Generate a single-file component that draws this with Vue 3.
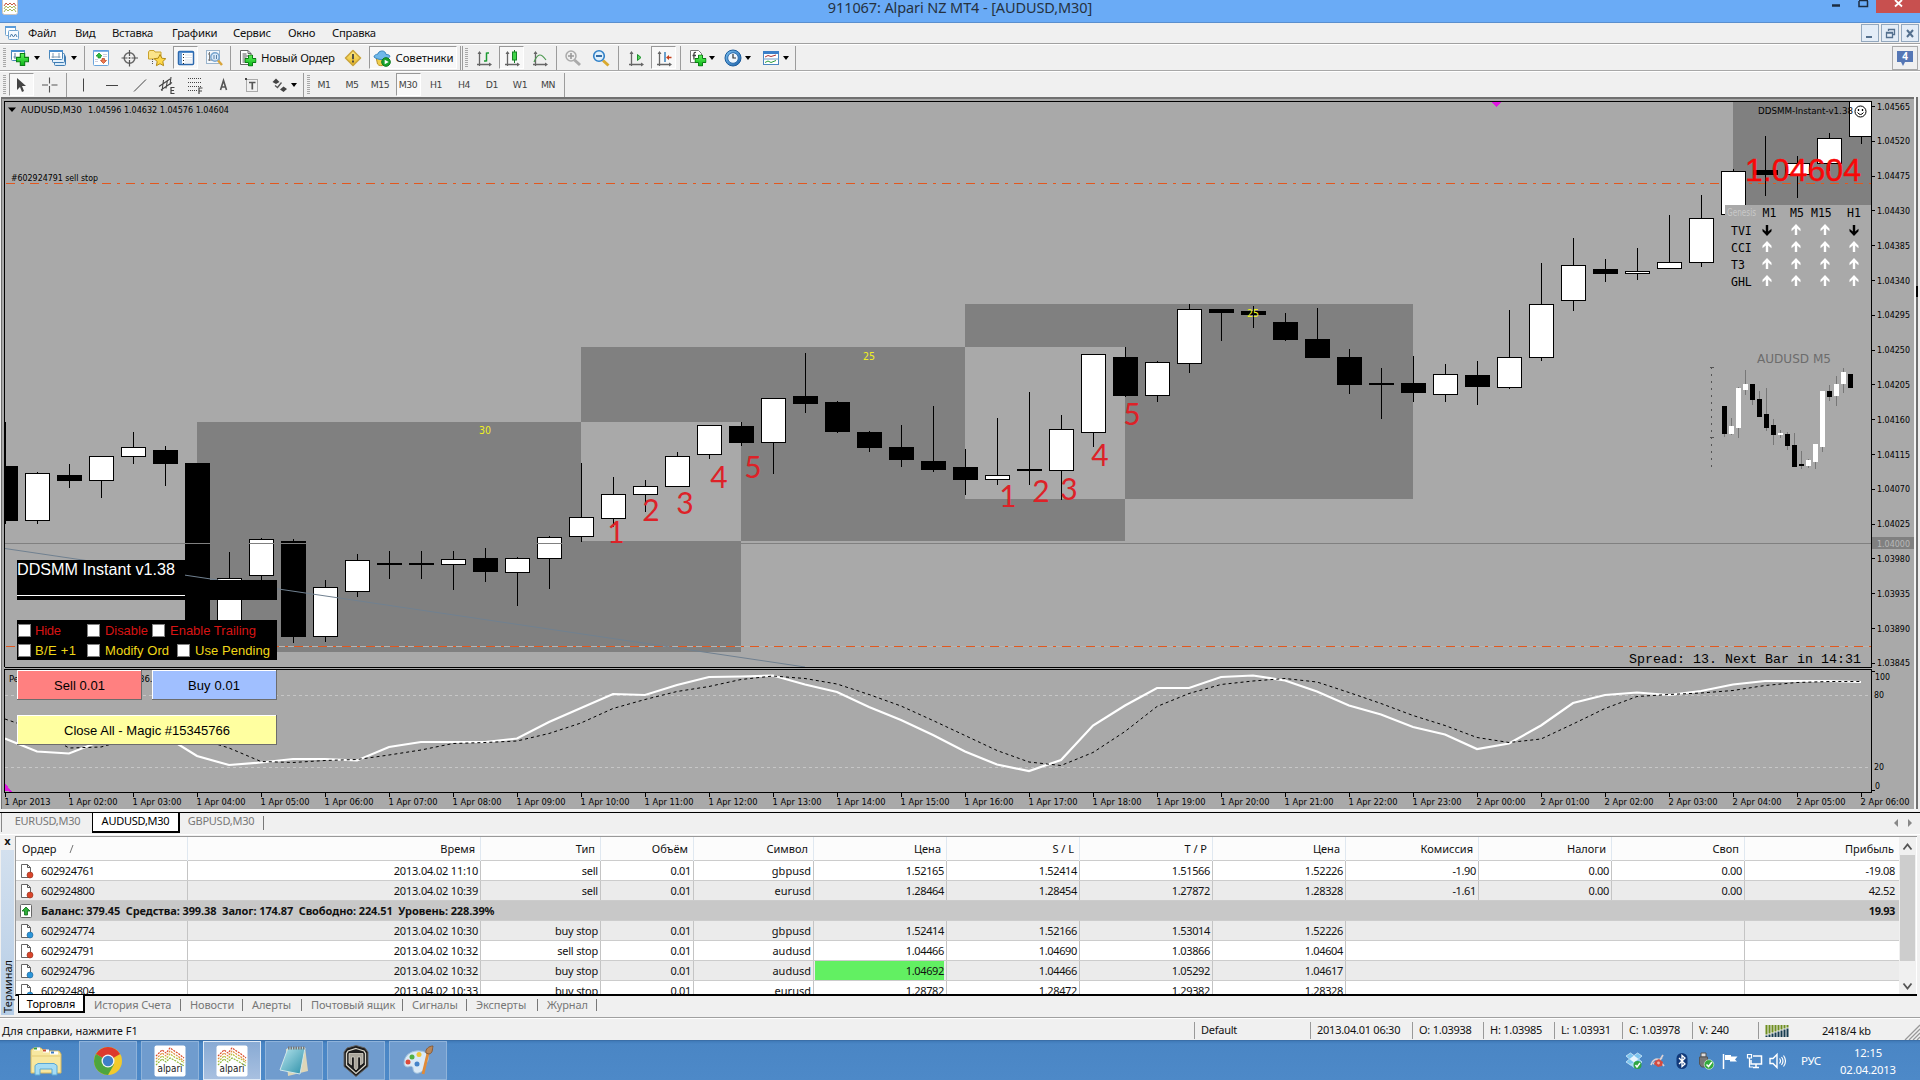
<script setup>
const menu = [
  ['Файл', 28, 29], ['Вид', 18, 20], ['Вставка', 17, 42], ['Графики', 18, 44],
  ['Сервис', 17, 37], ['Окно', 18, 27], ['Справка', 17, 43],
]

// kind, gap before, width, payload
const tools = [
  ['grip', 3, 3], ['icon', 5, 18, 'newchart'], ['arr', 5, 6], ['icon', 9, 18, 'profiles'], ['arr', 4, 6],
  ['sep', 7, 1], ['icon', 7, 18, 'market'], ['icon', 11, 18, 'target'], ['icon', 9, 18, 'star'],
  ['press', 7, 25, 'navigator'], ['icon', 7, 18, 'tester'], ['sep', 7, 1], ['icon', 8, 18, 'order'],
  ['text', 4, 76, 'Новый Ордер'], ['icon', 7, 18, 'warn'], ['press', 7, 88, 'experts', 'Советники'],
  ['sep', 3, 1], ['sep', 1, 1], ['grip', 2, 3], ['icon', 7, 18, 'bars'], ['press', 6, 25, 'candle'],
  ['icon', 7, 18, 'line'], ['sep', 7, 1], ['icon', 7, 18, 'zoomin'], ['icon', 10, 18, 'zoomout'],
  ['sep', 8, 1], ['icon', 8, 18, 'scroll'], ['press', 6, 25, 'shift'], ['sep', 4, 1],
  ['icon', 8, 18, 'indic'], ['arr', 2, 6], ['icon', 9, 18, 'clock'], ['arr', 3, 6],
  ['icon', 11, 18, 'template'], ['arr', 3, 6], ['sep', 6, 1],
]
const drawTools = [
  ['grip', 3, 3], ['press', 3, 25, 'cursor'], ['icon', 7, 18, 'cross'], ['sep', 7, 1], ['icon', 7, 18, 'vline'],
  ['icon', 11, 18, 'hline'], ['icon', 10, 18, 'trend'], ['icon', 9, 18, 'channel'], ['icon', 10, 18, 'fibo'],
  ['icon', 10, 18, 'lettera'], ['icon', 11, 18, 'lettert'], ['icon', 10, 18, 'shapes'], ['arr', 2, 6],
  ['sep', 6, 1], ['grip', 3, 3],
]
const frames = ['M1', 'M5', 'M15', 'M30', 'H1', 'H4', 'D1', 'W1', 'MN']

// colour, high, body top, body bottom, low
const bars = [
  ['b', 422, 466, 521, 524], ['w', 472, 473, 521, 524], ['b', 464, 475, 481, 488], ['w', 456, 456, 481, 498],
  ['w', 432, 447, 457, 464], ['b', 446, 450, 464, 486], ['b', 463, 463, 640, 642], ['w', 552, 578, 632, 636],
  ['w', 538, 539, 576, 582], ['b', 539, 541, 637, 643], ['w', 580, 587, 637, 642], ['w', 554, 560, 592, 597],
  ['b', 551, 563, 565, 579], ['b', 551, 563, 565, 579], ['w', 551, 559, 565, 590], ['b', 548, 558, 572, 582],
  ['w', 557, 558, 573, 606], ['w', 536, 537, 559, 589], ['w', 463, 517, 537, 542], ['w', 477, 494, 519, 527],
  ['w', 480, 486, 495, 512], ['w', 452, 456, 487, 487], ['w', 425, 425, 455, 459], ['b', 422, 426, 443, 446],
  ['w', 398, 398, 443, 474], ['b', 353, 396, 404, 413], ['b', 401, 402, 432, 433], ['b', 431, 432, 448, 452],
  ['b', 425, 447, 460, 467], ['b', 406, 461, 470, 472], ['b', 449, 467, 480, 495], ['w', 418, 475, 480, 485],
  ['b', 392, 469, 471, 485], ['w', 415, 429, 471, 500], ['w', 354, 354, 433, 447], ['b', 347, 357, 396, 397],
  ['w', 361, 362, 396, 402], ['w', 304, 309, 364, 373], ['b', 309, 309, 313, 341], ['b', 306, 311, 315, 328],
  ['b', 313, 322, 340, 341], ['b', 308, 339, 358, 358], ['b', 349, 357, 385, 394], ['b', 368, 383, 385, 419],
  ['b', 356, 383, 393, 402], ['w', 364, 374, 395, 402], ['b', 361, 375, 387, 405], ['w', 310, 357, 388, 389],
  ['w', 263, 304, 358, 361], ['w', 238, 265, 301, 311], ['b', 259, 269, 274, 282], ['w', 248, 271, 274, 280],
  ['w', 215, 262, 269, 269], ['w', 195, 218, 263, 267], ['w', 169, 171, 215, 215], ['b', 136, 170, 175, 196],
  ['w', 156, 163, 175, 198], ['w', 133, 138, 164, 171], ['w', 98, 98, 137, 144],
]
const mini = [
  ['b', 406, 434, 406, 437], ['w', 426, 434, 418, 435], ['w', 388, 428, 387, 438], ['w', 384, 390, 370, 395],
  ['b', 384, 400, 384, 405], ['b', 399, 417, 391, 417], ['b', 414, 428, 388, 431], ['b', 425, 435, 419, 445],
  ['w', 433, 435, 430, 438], ['b', 434, 446, 432, 450], ['b', 445, 467, 433, 467], ['b', 464, 466, 451, 469],
  ['w', 460, 466, 459, 468], ['w', 444, 462, 444, 469], ['w', 391, 447, 391, 452], ['b', 391, 397, 385, 401],
  ['w', 384, 396, 376, 406], ['w', 372, 384, 368, 393], ['b', 374, 388, 374, 388],
]
const main = [738.5, 751.5, 753.5, 741, 736, 736, 756, 765, 762.5, 759, 759, 760.5, 747, 742, 742, 742, 738.5, 722, 708, 694, 695,
  685, 677, 676.5, 675.5, 684.5, 692, 707, 720, 735, 751.5, 764.5, 771, 760, 725.5, 705.5, 688, 688, 677, 675.5, 680.5,
  691.5, 705.5, 714.5, 727, 734.5, 749, 743.5, 725.5, 703, 695, 692.5, 695, 691, 684.5, 681, 681, 681, 682]
const signal = [719, 730, 748, 747, 738, 736, 738, 748, 761.5, 762.5, 760.5, 759.5, 755, 750, 743.5, 742.5, 741, 733.5, 723, 708.5,
  699.5, 691.5, 686.5, 679.5, 676, 678.5, 684, 694.5, 706, 720.5, 735.5, 750.5, 762, 765.5, 752.5, 731.5, 706.5, 693.5,
  684.5, 681, 678.5, 682, 692.5, 703.5, 715.5, 725.5, 737.5, 742.5, 739, 724, 708.5, 696.5, 694.5, 693, 690.5, 685.5,
  682.5, 681.5, 681.5]
const pts = (a) => a.map((y, i) => `${5 + i * 32},${y}`).join(' ')

const prices = ['1.04565', '1.04520', '1.04475', '1.04430', '1.04385', '1.04340', '1.04295', '1.04250', '1.04205',
  '1.04160', '1.04115', '1.04070', '1.04025', '1.03980', '1.03935', '1.03890', '1.03845']
const times = Array.from({ length: 30 }, (_, k) => {
  if (k === 0) return '1 Apr 2013'
  const h = k + 1
  return h < 24 ? `1 Apr ${String(h).padStart(2, '0')}:00` : `2 Apr ${String(h - 24).padStart(2, '0')}:00`
})
const waves = [['1', 616, 543], ['2', 651, 521], ['3', 685, 514], ['4', 719, 488], ['5', 753, 478],
  ['1', 1008, 507], ['2', 1041, 502], ['3', 1069, 500], ['4', 1100, 466], ['5', 1132, 425]]
const signs = [['TVI', 235, 'duud'], ['CCI', 252, 'uuuu'], ['T3', 269, 'uuuu'], ['GHL', 286, 'uuuu']]
const signX = [1767, 1796, 1825, 1854]

const heads = ['Ордер', 'Время', 'Тип', 'Объём', 'Символ', 'Цена', 'S / L', 'T / P', 'Цена', 'Комиссия', 'Налоги', 'Своп', 'Прибыль']
const rows = [
  ['r', '602924761', '2013.04.02 11:10', 'sell', '0.01', 'gbpusd', '1.52165', '1.52414', '1.51566', '1.52226', '-1.90', '0.00', '0.00', '-19.08'],
  ['r', '602924800', '2013.04.02 10:39', 'sell', '0.01', 'eurusd', '1.28464', '1.28454', '1.27872', '1.28328', '-1.61', '0.00', '0.00', '42.52'],
  null,
  ['b', '602924774', '2013.04.02 10:30', 'buy stop', '0.01', 'gbpusd', '1.52414', '1.52166', '1.53014', '1.52226', '', '', '', ''],
  ['r', '602924791', '2013.04.02 10:32', 'sell stop', '0.01', 'audusd', '1.04466', '1.04690', '1.03866', '1.04604', '', '', '', ''],
  ['b', '602924796', '2013.04.02 10:32', 'buy stop', '0.01', 'audusd', '1.04692', '1.04466', '1.05292', '1.04617', '', '', '', ''],
  ['b', '602924804', '2013.04.02 10:33', 'buy stop', '0.01', 'eurusd', '1.28782', '1.28472', '1.29382', '1.28328', '', '', '', ''],
]
const termTabs = [['История Счета', 96], ['Новости', 62], ['Алерты', 59], ['Почтовый ящик', 101], ['Сигналы', 64], ['Эксперты', 71], ['Журнал', 59]]
const status = [['Default', 116], ['2013.04.01 06:30', 102], ['O: 1.03938', 71], ['H: 1.03985', 71], ['L: 1.03931', 68], ['C: 1.03978', 70], ['V: 240', 66]]
const apps = ['chrome', 'alpari', 'alpari', 'notepad', 'tanks', 'paint']
const tray = ['dropbox', 'gear', 'bt', 'usb', 'flag', 'net', 'sound']
</script>

<template>
  <div class="screen">
    <svg class="defs" width="0" height="0">
      <defs>
        <linearGradient id="gPlus" x1="0" y1="0" x2="0" y2="1"><stop offset="0" stop-color="#5ff45a" /><stop offset="1" stop-color="#0eb41a" /></linearGradient>
        <linearGradient id="gBlue" x1="0" y1="0" x2="1" y2="1"><stop offset="0" stop-color="#7fc4f2" /><stop offset="1" stop-color="#1a5fa8" /></linearGradient>
        <linearGradient id="gGold" x1="0" y1="0" x2="0" y2="1"><stop offset="0" stop-color="#ffef8a" /><stop offset="1" stop-color="#e5b21c" /></linearGradient>
        <linearGradient id="gNote" x1="0" y1="0" x2="1" y2="1"><stop offset="0" stop-color="#b9e6ee" /><stop offset="1" stop-color="#2b8fa8" /></linearGradient>
        <symbol id="plus" viewBox="0 0 12 12"><path d="M4 .5h4V4h3.500v4H8v3.500H4V8H.5V4H4z" fill="url(#gPlus)" stroke="#0a7d14" /></symbol>
        <symbol id="newchart" viewBox="0 0 18 18"><rect x=".5" y="1.500" width="13" height="10" rx="1" fill="#fff" stroke="#4a86b8" /><path d="M0 2h14" stroke="#4a8fcf" stroke-width="2" /><path d="M4 4v6M2.500 8h2M9 8h3" stroke="#54789a" fill="none" /><use href="#plus" x="5" y="4" width="13" height="13" /></symbol>
        <symbol id="profiles" viewBox="0 0 18 18"><rect x="5.500" y="6.500" width="11" height="10" rx="1" fill="#d8ebfa" stroke="#3f7cb3" /><rect x="3.500" y="4.500" width="12" height="9" rx="1" fill="#e4f1fc" stroke="#3f7cb3" /><rect x=".5" y="1.500" width="13" height="9" rx="1" fill="#fff" stroke="#4a86b8" /><path d="M0 2h14" stroke="#4a8fcf" stroke-width="2" /><path d="M4 4v5M2.500 8h9M10 4v5" stroke="#7d98b0" fill="none" /></symbol>
        <symbol id="market" viewBox="0 0 18 18"><rect x="1.500" y="1.500" width="15" height="15" rx="1" fill="#fff" stroke="#6aa5dc" /><path d="M1 2h16" stroke="#5a9be0" stroke-width="1.500" /><path d="M11 5.500h4M11 7.500h4M3 10.500h3M3 12.500h3" stroke="#ccd" /><path d="M7 4l3 3-1.500.2v1.800L6 9V7.200L4 7z" fill="#2fbe3c" stroke="#128a20" stroke-width=".7" /><path d="M11.500 14.500l-3-3 1.500-.2V9.500h2.500v1.800l2 .2z" fill="#ee7a50" stroke="#b8401c" stroke-width=".7" /></symbol>
        <symbol id="target" viewBox="0 0 18 18"><circle cx="8.500" cy="9" r="5.300" fill="none" stroke="#666" stroke-width="1.500" /><path d="M8.500 1v6M8.500 11v6.500M.5 9h6M10.500 9h6.500" stroke="#555" stroke-width="1.200" /><circle cx="8.500" cy="9" r="1" fill="#555" /></symbol>
        <symbol id="star" viewBox="0 0 18 18"><path d="M.5 10V3l1-1.500H6L7 3h6v7z" fill="#fbe48a" stroke="#c9a22d" /><path d="M4.500 10v5" stroke="#555" stroke-dasharray="1 1" /><path d="M12 5.500l1.800 3.700 4 .5-3 2.800.8 4.200-3.600-2-3.600 2 .8-4.200-3-2.800 4-.5z" fill="#ffd94a" stroke="#b38a14" /></symbol>
        <symbol id="navigator" viewBox="0 0 18 18"><rect x="1.500" y="2.500" width="15" height="13" rx="1" fill="#fff" stroke="#2c68ad" stroke-width="1.500" /><path d="M2 3h14" stroke="#2f74c0" stroke-width="1.500" /><rect x="2" y="4" width="3" height="11" fill="#6fa3dc" /><path d="M8 6h7M8 8.500h7M8 11h7M8 13h7" stroke="#d4dae4" stroke-width=".8" /><path d="M6.500 5v10" stroke="#222" stroke-dasharray="1 2" /></symbol>
        <symbol id="tester" viewBox="0 0 18 18"><rect x="1.500" y="1.500" width="13" height="13" fill="#f4f8fc" stroke="#9ab4cc" /><path d="M4.500 3v9M3 5h2M3 11h8" stroke="#777" /><circle cx="10" cy="8" r="4.200" fill="#d5e8f8" fill-opacity=".85" stroke="#79a5ce" stroke-width="1.500" /><path d="M9 6v4M11.500 6v4" stroke="#5a82a8" /><path d="M13 11.500l4 4.500" stroke="#d8a43a" stroke-width="2.500" /></symbol>
        <symbol id="order" viewBox="0 0 18 18"><path d="M1.500 1.500h7.500l3 3v11H1.500z" fill="#fff" stroke="#666" /><path d="M9 1.500v3h3" fill="none" stroke="#666" /><path d="M3.500 5h4M3.500 7h6M3.500 9h4M3.500 11h3M3.500 13h3" stroke="#555" /><use href="#plus" x="5.500" y="5.500" width="12" height="12" /></symbol>
        <symbol id="warn" viewBox="0 0 18 18"><path d="M9 1.500L16.500 9 9 16.500 1.500 9z" fill="url(#gGold)" stroke="#cba53c" stroke-linejoin="round" stroke-width="1.600" /><path d="M9 5v5.200M9 11.500v2" stroke="#444" stroke-width="1.800" /></symbol>
        <symbol id="experts" viewBox="0 0 18 18"><path d="M3 8l1.500 7c1 2 5 2 7 1l3-6z" fill="#f0cf4c" stroke="#b8922a" /><path d="M1 8c0-2 2-2.500 4-3 0-3 6-4.500 7.500-1 .5 1 .5 1.500.5 1.500 3 0 4 1 4 2-3 4-12 4-16 .5z" fill="#6fb8ea" stroke="#3b86bd" /><circle cx="13" cy="13" r="4.300" fill="#19a32c" stroke="#0c7a1b" /><path d="M11.700 10.700l4 2.300-4 2.300z" fill="#fff" /></symbol>
        <symbol id="axes" viewBox="0 0 18 18"><path d="M4.500 3v14M2 15.500h13.500" stroke="#666" stroke-width="1.300" fill="none" /><path d="M4.500 2l2 3h-4zM17 15.500l-3-2v4z" fill="#666" /></symbol>
        <symbol id="bars" viewBox="0 0 18 18"><use href="#axes" width="18" height="18" /><path d="M11.500 3.500v9M9 12h2.500M11.500 4H14" stroke="#1d9a33" stroke-width="1.500" /></symbol>
        <symbol id="candle" viewBox="0 0 18 18"><use href="#axes" width="18" height="18" /><path d="M11.500 1v13" stroke="#148023" /><rect x="9.500" y="3" width="4" height="8" fill="#3fd447" stroke="#148023" /></symbol>
        <symbol id="line" viewBox="0 0 18 18"><use href="#axes" width="18" height="18" /><path d="M3 13c4-9 7-9 12-2" stroke="#4d9a50" stroke-width="1.200" fill="none" /></symbol>
        <symbol id="zoomin" viewBox="0 0 18 18"><path d="M10.500 11l5.500 5" stroke="#aaa" stroke-width="3" /><circle cx="7" cy="7" r="5" fill="#eee" stroke="#aaa" stroke-width="1.500" /><path d="M4 7h6M7 4v6" stroke="#999" stroke-width="1.600" /></symbol>
        <symbol id="zoomout" viewBox="0 0 18 18"><path d="M11 11.500l5.500 5" stroke="#d9a92e" stroke-width="3" /><circle cx="7" cy="7" r="5.300" fill="#dff0fc" stroke="#2f80c8" stroke-width="1.600" /><path d="M4 7h6" stroke="#235f9e" stroke-width="1.800" /></symbol>
        <symbol id="scroll" viewBox="0 0 18 18"><use href="#axes" width="18" height="18" /><path d="M10.500 5.500l3.500 3-3.500 3z" fill="#57d65f" stroke="#1b8f2b" /></symbol>
        <symbol id="shift" viewBox="0 0 18 18"><use href="#axes" width="18" height="18" /><path d="M10 3v10" stroke="#2b7ab8" stroke-width="1.400" /><path d="M11 8.500l3-2.500v1.800h2.500v1.400H14V11z" fill="#c3401c" /></symbol>
        <symbol id="indic" viewBox="0 0 18 18"><path d="M1.500 1.500h8l3 3v9h-11z" fill="#fff" stroke="#777" /><path d="M7 3.500c-3-1-2 4-2 7M3.500 6.500H7" stroke="#444" fill="none" stroke-width="1.300" /><use href="#plus" x="5.500" y="5.500" width="12" height="12" /></symbol>
        <symbol id="clock" viewBox="0 0 18 18"><circle cx="9" cy="9" r="8" fill="url(#gBlue)" stroke="#1b5b9c" /><circle cx="9" cy="9" r="5.300" fill="#eef6fd" stroke="#2a6bad" /><path d="M9 5v4h3" stroke="#333" fill="none" stroke-width="1.200" /></symbol>
        <symbol id="template" viewBox="0 0 18 18"><rect x="1.500" y="2.500" width="15" height="13" fill="#fff" stroke="#4a86c0" /><path d="M1 3.500h16" stroke="#3b7fc8" stroke-width="3" /><path d="M1 10h16" stroke="#6a9bc8" /><path d="M3 8l3-1.500 3 1 5-1.500" stroke="#a33" fill="none" /><path d="M3 13.500l3-1.500 3 1.500 5-2" stroke="#2b9a3b" fill="none" /></symbol>
        <symbol id="cursor" viewBox="0 0 18 18"><path d="M4 2v12l3-3 2 5 2-1-2-5h4z" fill="#444" /></symbol>
        <symbol id="cross" viewBox="0 0 18 18"><path d="M8.500 1.500v6M8.500 10v6.500M1 9h6M10.500 9h6" stroke="#555" stroke-width="1.100" /></symbol>
        <symbol id="vline" viewBox="0 0 18 18"><path d="M9.500 2.500v13" stroke="#444" /></symbol>
        <symbol id="hline" viewBox="0 0 18 18"><path d="M3 9.500h12" stroke="#444" /></symbol>
        <symbol id="trend" viewBox="0 0 18 18"><path d="M3 15.500L15 3.500" stroke="#444" /></symbol>
        <symbol id="channel" viewBox="0 0 18 18"><path d="M1 10.500L12 3M3 14L14 6.500M4 15l1.500-11M8 12.500L9.500 4M12 9l1-8" stroke="#444" stroke-width="1.100" /><path d="M16.500 11.500H13v6h3.500M13 14.500h3" stroke="#444" fill="none" stroke-width="1.200" /></symbol>
        <symbol id="fibo" viewBox="0 0 18 18"><path d="M2 2.500h14M2 6.500h14M2 10.500h14M2 14.500h9" stroke="#444" stroke-dasharray="1 1" /><path d="M16.500 12H13v6M13 15h3" stroke="#444" fill="none" stroke-width="1.200" /></symbol>
        <symbol id="lettera" viewBox="0 0 18 18"><path d="M6.500 14L9.500 4.500 12.500 14M7.500 11h4" stroke="#555" fill="none" stroke-width="1.600" /></symbol>
        <symbol id="lettert" viewBox="0 0 18 18"><rect x="3.500" y="3.500" width="11" height="12" fill="none" stroke="#666" stroke-dasharray="1 1" /><path d="M6 6.500h6.500M9.300 6.500v7" stroke="#555" stroke-width="1.700" /><path d="M2 2h2v2H2z" fill="#444" /></symbol>
        <symbol id="shapes" viewBox="0 0 18 18"><path d="M1.500 6l3.500-3.500L8.500 6 5 8z" fill="#444" /><path d="M9 13.500l3.500-3 3.500 2.500-3.500 3z" fill="#444" /><path d="M4 9.500l2.500 2 4-5" stroke="#555" stroke-width="1.300" fill="none" /></symbol>
        <symbol id="up" viewBox="0 0 10 12"><path d="M5 0L.5 4.800v2.400l3.300-2.700V11h2.400V4.500l3.300 2.700V4.800z" fill="#fff" /></symbol>
        <symbol id="down" viewBox="0 0 10 12"><path d="M5 12L.5 7.200V4.800l3.300 2.700V1h2.400v6.500l3.300-2.700v2.400z" fill="#000" /></symbol>
        <symbol id="alpari" viewBox="0 0 32 32">
          <rect x=".5" y=".5" width="31" height="31" rx="2" fill="#fff" />
          <g fill="none" stroke-dasharray="2 1" stroke-width="1.200">
            <path d="M2 11l6-6 4 3 4-5 6 4 3 2 5 4" stroke="#d8492a" /><path d="M2 14l6-6 4 3 4-5 6 4 3 2 5 4" stroke="#e08a3c" />
            <path d="M2 17l6-6 4 3 4-5 6 4 3 1 5 4" stroke="#b7bd3a" /><path d="M2 20l6-6 4 3 4-4 6 3 3 2 5 3" stroke="#8fb83a" />
          </g>
        </symbol>
        <symbol id="chrome" viewBox="0 0 32 32"><circle cx="16" cy="16" r="14" fill="#f2ca2c" /><path d="M16 16L3.900 9A14 14 0 0 1 28.100 9z" fill="#dc3a2d" /><path d="M3.900 9A14 14 0 0 0 16 30l6-10.500L16 16z" fill="#4da53f" /><circle cx="16" cy="16" r="6.500" fill="#f5f5f5" /><circle cx="16" cy="16" r="5.200" fill="#3f7fc8" /></symbol>
        <symbol id="explorer" viewBox="0 0 34 32"><path d="M2 28V5l3-2h7l2 2h4l1 1h11l2 3v19z" fill="#f7e7a0" stroke="#d9b95e" /><path d="M5 4h6M14 6h6M21 8h8" stroke="#fff" stroke-width="3" /><path d="M5 3.500h3" stroke="#3a9c46" stroke-width="2" /><path d="M14 5.500h3" stroke="#c4452e" stroke-width="2" /><path d="M22 7.500h3" stroke="#3b79c4" stroke-width="2" /><path d="M3 11h28" stroke="#e3ca74" /><path d="M6 30V20.500l3-2h16l3 2V30h-5v-6H11v6z" fill="#a5dcf4" stroke="#5ba8d4" /></symbol>
        <symbol id="notepad" viewBox="0 0 32 32"><path d="M8 4l19-2 3 24-20 5z" fill="#ddd6b8" /><path d="M10 3l17 0-5 26L2 25z" fill="url(#gNote)" stroke="#cfe6ea" /><path d="M10 3h17" stroke="#777" stroke-width="3" stroke-dasharray="1.500 1" /></symbol>
        <symbol id="tanks" viewBox="0 0 32 32"><path d="M16 .5l9 2.500 3 4v14.500L16 31.500 4 21.500V7l3-4z" fill="#1c1c1c" stroke="#666" /><path d="M16 3.500l8 2.500 1.500 2.500V20L16 28.500 6.500 20V8.500L8 6z" fill="none" stroke="#d8d4c8" stroke-width="1.300" /><path d="M9 8.500h14v9.500l-2.500 2v-8h-2.800v11L16 25l-1.700-2V12h-2.800v8L9 18z" fill="#aaa69c" stroke="#e4e0d4" stroke-width=".7" /></symbol>
        <symbol id="paint" viewBox="0 0 32 32"><path d="M2 18C2 10 10 5 18 6c8 0 10 7 7 11-2 3-1 8-6 10-5 3-8 0-8-3s-2-3-5-2c-3 0-4-2-4-4z" fill="#dbeaf6" stroke="#9fc0dc" /><circle cx="6" cy="17" r="2.500" fill="#dd4b3a" /><circle cx="10" cy="12" r="2.500" fill="#52b043" /><circle cx="17" cy="9.500" r="2.500" fill="#efc63a" /><circle cx="15" cy="19" r="2.500" fill="#4584c9" /><path d="M21 29L26 8" stroke="#e08a38" stroke-width="2.800" /><path d="M24 8c-1-4 3-7 7-7-1 4 0 7-4 8z" fill="#b98658" stroke="#8a5c36" /></symbol>
        <symbol id="dropbox" viewBox="0 0 18 18"><path d="M5.500 1L9 3.500 12.500 1 17 4l-3.500 3 3.500 3-4.500 3L9 10.500 5.500 13 1 10l3.500-3L1 4z" fill="#7cc4ee" stroke="#dff2fc" stroke-width=".7" /><path d="M9 3.500L13.500 7 9 10.500 4.500 7z" fill="#e8f5fd" /><path d="M4 12l5-1 4 1-4 4z" fill="#a9dbf5" /><circle cx="12.500" cy="13" r="4" fill="#30a545" /><path d="M10.500 13l1.500 2 3-4" stroke="#fff" fill="none" stroke-width="1.400" /></symbol>
        <symbol id="gear" viewBox="0 0 18 18"><path d="M2 13c1-5 5-7 9-5l3-5M10 8l5 6M4 12l9-6" stroke="#d8d0d4" stroke-width="1.700" fill="none" /><path d="M6 9l4-2 4 3-1 4-4 1-4-3z" fill="#d44b40" /><circle cx="9.500" cy="11" r="1.400" fill="#f2b5a8" /></symbol>
        <symbol id="bt" viewBox="0 0 18 18"><rect x="3.500" y="1" width="11" height="16" rx="5.500" fill="#123a7a" /><path d="M6 6l6 6-3 2.500v-11L12 6l-6 6" stroke="#fff" fill="none" stroke-width="1.300" /></symbol>
        <symbol id="usb" viewBox="0 0 18 18"><path d="M4 1h5v4H4z" fill="#ddd" stroke="#555" /><path d="M2.500 5h8v7l-2 3h-4l-2-3z" fill="#777" stroke="#555" /><circle cx="12" cy="12.500" r="4.800" fill="#34aa3d" stroke="#e8f8e8" stroke-width=".6" /><path d="M9.500 12.500l2 2 3.500-4.500" stroke="#fff" fill="none" stroke-width="1.600" /></symbol>
        <symbol id="flag" viewBox="0 0 18 18"><path d="M2.500 2v15" stroke="#fff" stroke-width="1.500" /><path d="M4 3h6v1.500h6.500L14 7.500l2 2H9V8H4z" fill="#fff" /></symbol>
        <symbol id="net" viewBox="0 0 18 18"><path d="M8 4h8.500v8H6V8" stroke="#fff" fill="none" stroke-width="1.500" /><path d="M8 15.500h6M11 12v4" stroke="#fff" stroke-width="1.500" /><path d="M2.500 2.500h4V6h-4zM4.500 6v9H8" stroke="#fff" fill="none" stroke-width="1.200" /></symbol>
        <symbol id="sound" viewBox="0 0 18 18"><path d="M1 6.500h3l4-4v13l-4-4H1z" fill="none" stroke="#fff" stroke-width="1.400" /><path d="M10.500 6.500q2 2.500 0 5M12.500 5q3 4 0 8M14.500 3.500q4 5.500 0 11" stroke="#fff" fill="none" stroke-width="1.200" /></symbol>
      </defs>
    </svg>

    <header class="title">
      <svg class="appicon" width="16" height="15" viewBox="0 0 16 15"><rect x=".5" y="-2" width="15" height="16.500" rx="2" fill="#fff" stroke="#cfc6c0" /><path d="M2 6l2-3 2 2 2-2 2 2 2-2 2 3" stroke="#c4563a" fill="none" /><path d="M2 9l2-3 2 2 2-2 2 2 2-2 2 3M2 12l2-3 2 2 2-2 2 2 2-2 2 3" stroke="#a9b75a" fill="none" /></svg>
      <h1>911067: Alpari NZ MT4 - [AUDUSD,M30]</h1>
      <svg class="winbtns" width="92" height="14"><path d="M4 5.500h8" stroke="#1c2c40" stroke-width="2.500" /><path d="M31 1v5.500h8.500V1M31 .5h9" stroke="#1c2c40" fill="none" stroke-width="1.500" /><rect x="48" y="0" width="44" height="13" fill="#c8504f" /><path d="M67 0l7 6.500M74 0l-7 6.500" stroke="#fff" stroke-width="1.800" /></svg>
    </header>

    <nav class="menu">
      <svg class="menuicon" width="16" height="16" viewBox="0 0 16 16"><rect x="1.500" y="1.500" width="10" height="9" rx="1" fill="#fff" stroke="#6fa3cf" /><path d="M1 2h11" stroke="#5b9bd8" stroke-width="2" /><rect x="4.500" y="5.500" width="10" height="9" rx="1" fill="#f4faff" stroke="#6fa3cf" /><path d="M6 12l1.500-3 2 3 2-3L13 12" stroke="#4d7ca8" fill="none" /></svg>
      <span v-for="(m, i) in menu" :key="m[0]" class="fit" :style="{ marginLeft: (i ? m[1] : 8) + 'px', width: m[2] + 'px' }">{{ m[0] }}</span>
      <div class="mdi">
        <svg width="17" height="17"><path d="M4 12h6" stroke="#54708e" stroke-width="2" /></svg>
        <svg width="17" height="17"><path d="M6.500 6V4.500h6v5H11M4.500 7.500h6v5h-6zM4.500 8h6" stroke="#54708e" fill="none" stroke-width="1.300" /></svg>
        <svg width="17" height="17"><path d="M5 5l6 7M11 5l-6 7" stroke="#54708e" stroke-width="2" /></svg>
      </div>
    </nav>

    <div class="bar first">
      <template v-for="(t, i) in tools" :key="i">
        <span :class="t[0]" :style="{ marginLeft: t[1] + 'px', width: t[2] + 'px' }">
          <svg v-if="t[0] === 'icon' || t[0] === 'press'" width="18" height="18"><use :href="'#' + t[3]" /></svg>
          <template v-if="t[0] === 'text'">{{ t[3] }}</template>
          <b v-if="t[4]">{{ t[4] }}</b>
        </span>
      </template>
      <div class="chat"><svg width="18" height="18" viewBox="0 0 18 18"><path d="M1 2h16v11H9l-2 4-2-4H1z" fill="#5577b5" /></svg><i>4</i></div>
    </div>
    <div class="bar second">
      <span v-for="(t, i) in drawTools" :key="i" :class="t[0]" :style="{ marginLeft: t[1] + 'px', width: t[2] + 'px' }">
        <svg v-if="t[3]" width="18" height="18"><use :href="'#' + t[3]" /></svg>
      </span>
      <span v-for="f in frames" :key="f" class="tf"><em :class="{ on: f === 'M30' }">{{ f }}</em></span>
      <span class="sep last"></span>
    </div>

    <svg class="chart" width="1920" height="715" viewBox="0 97 1920 715">
      <defs>
        <clipPath id="plot"><rect x="5" y="102" width="1866" height="565" /></clipPath>
        <clipPath id="osc"><rect x="5" y="670" width="1866" height="122" /></clipPath>
      </defs>
      <g shape-rendering="crispEdges">
        <rect x="0" y="97" width="1920" height="715" fill="#f0f0f0" />
        <rect x="1" y="97" width="1917" height="714" fill="#707070" />
        <rect x="2" y="99" width="1912" height="710" fill="#a9a9a9" />
        <rect x="0" y="809" width="1920" height="2" fill="#f4f4f4" />
        <rect x="1914" y="97" width="2" height="714" fill="#f4f4f4" />
        <rect x="1918" y="97" width="2" height="714" fill="#eee" />
        <rect x="1916" y="286" width="2" height="11" fill="#000" />
        <path fill-rule="evenodd" fill="#808080" d="M197 422H741V652H197zM581 347H1125V541H581zM965 304H1413V499H965zM1733 102H1871V205H1733z" />
        <path d="M6 183.500H1871" stroke="#e2581e" stroke-dasharray="9 6 3 6" />
        <path d="M277 646.500H1871" stroke="#b8b4b0" />
        <path d="M6 646.500H1871" stroke="#e2581e" stroke-dasharray="9 6 3 6" />
        <g clip-path="url(#plot)">
          <template v-for="(b, i) in bars" :key="i">
            <path :d="`M${5.5 + i * 32} ${b[1]}V${b[4]}`" stroke="#000" />
            <rect v-if="b[0] === 'b'" :x="-7 + i * 32" :y="b[2]" width="25" :height="b[3] - b[2]" />
            <rect v-else :x="-6.5 + i * 32" :y="b[2] + 0.5" width="24" :height="b[3] - b[2] - 1" fill="#fff" stroke="#000" />
          </template>
          <path d="M5 543.500H1871" stroke="#808080" />
          <path d="M5 548.500L805 667" stroke="#708090" shape-rendering="auto" />
        </g>
        <g clip-path="url(#osc)">
          <path d="M5 695.500H1871M5 767.500H1871" stroke="#c6c6c6" stroke-dasharray="3 3" />
        </g>
        <path d="M4.500 667V101.500H1871.500V667.500H4.500M4.500 792V669.500H1871.500V792.500H4.500z" fill="none" stroke="#000" />
        <path d="M5 791v-8l7 9zM1492 102h9l-4.500 5z" fill="#e018e0" />
        <g v-for="(p, i) in prices" :key="p"><path :d="`M1872 ${Math.round(106 + i * 34.8) + 0.5}h3`" stroke="#000" /></g>
        <g v-for="(t, i) in times" :key="t"><path :d="`M${5.5 + i * 64} 793v4`" stroke="#000" /></g>
        <path d="M1872 671.500h3M1872 790.500h3" stroke="#000" />
        <rect x="1872" y="537" width="42" height="12" fill="#808080" />
      </g>
      <g clip-path="url(#osc)">
        <polyline :points="pts(main)" fill="none" stroke="#fff" stroke-width="2.200" />
        <polyline :points="pts(signal)" fill="none" stroke="#000" stroke-dasharray="3 3" />
      </g>

      <g class="tah">
        <text v-for="(p, i) in prices" :key="p" x="1877" :y="109.500 + i * 34.8" textLength="33" lengthAdjust="spacingAndGlyphs">{{ p }}</text>
        <text x="1877" y="547" textLength="33" lengthAdjust="spacingAndGlyphs" class="dim">1.04000</text>
        <text x="1875" y="680" textLength="15" lengthAdjust="spacingAndGlyphs">100</text>
        <text x="1874" y="698" textLength="10" lengthAdjust="spacingAndGlyphs">80</text>
        <text x="1874" y="770" textLength="10" lengthAdjust="spacingAndGlyphs">20</text>
        <text x="1875" y="789" textLength="5" lengthAdjust="spacingAndGlyphs">0</text>
        <text v-for="(t, i) in times" :key="t" :x="4.5 + i * 64" y="805" :textLength="i ? 49 : 46" lengthAdjust="spacingAndGlyphs">{{ t }}</text>
        <path d="M8 107.500h8l-4 4.500z" />
        <text x="21" y="113" textLength="61" lengthAdjust="spacingAndGlyphs">AUDUSD,M30</text>
        <text x="88" y="113" textLength="141" lengthAdjust="spacingAndGlyphs">1.04596 1.04632 1.04576 1.04604</text>
        <text x="11" y="181" textLength="87" lengthAdjust="spacingAndGlyphs">#602924791 sell stop</text>
        <text x="1758" y="114" textLength="95" lengthAdjust="spacingAndGlyphs">DDSMM-Instant-v1.38</text>
        <text x="9" y="682">Pe</text>
        <text x="139" y="682">86.</text>
        <text class="yel" x="479" y="434">30</text>
        <text class="yel" x="863" y="360">25</text>
        <text class="yel" x="1247" y="317">25</text>
        <text class="m5" x="1757" y="363" textLength="74" lengthAdjust="spacingAndGlyphs">AUDUSD M5</text>
      </g>
      <g fill="none" stroke="#000"><circle cx="1860.500" cy="111.500" r="5.500" fill="#fff" /><path d="M1857.500 112.500q3 4 6 0" /><path d="M1858.500 109v2M1862.500 109v2" stroke-width="1.300" /></g>

      <text v-for="(w, i) in waves" :key="i" class="wave" :x="w[1]" :y="w[2]">{{ w[0] }}</text>
      <text class="big" x="1745" y="181" textLength="116" lengthAdjust="spacingAndGlyphs">1.04604</text>

      <rect x="1725" y="205" width="36" height="14" fill="#a9a9a9" />
      <text class="gen" x="1727" y="216" textLength="29" lengthAdjust="spacingAndGlyphs">Genesis</text>
      <g class="mono">
        <text x="1762.500" y="217">M1</text><text x="1790" y="217">M5</text><text x="1811" y="217">M15</text><text x="1847" y="217">H1</text>
        <template v-for="s in signs" :key="s[0]">
          <text x="1731" :y="s[1]">{{ s[0] }}</text>
          <use v-for="(x, k) in signX" :key="x" :href="s[2][k] === 'u' ? '#up' : '#down'" :x="x - 5" :y="s[1] - 11" width="10" height="12" />
        </template>
      </g>

      <g shape-rendering="crispEdges">
        <path d="M1711.500 367V468" stroke="#555" stroke-width="1" stroke-dasharray="2 5" />
        <path d="M1710 367.500h4M1710 437.500h4" stroke="#555" />
        <template v-for="(m, i) in mini" :key="i">
          <rect :x="1724 + i * 7" :y="m[3]" width="1" :height="m[4] - m[3]" fill="#777" />
          <rect :x="1722 + i * 7" :y="m[1]" width="5" :height="m[2] - m[1]" :fill="m[0] === 'b' ? '#000' : '#fff'" />
        </template>
      </g>
      <text class="spread" x="1629" y="663" textLength="232">Spread: 13. Next Bar in 14:31</text>

      <g shape-rendering="crispEdges">
        <path d="M17 560H185V580H277V600H17zM17 620H277V660H17z" />
        <path d="M17 595.500H185" stroke="#fff" />
        <g v-for="c in [[18, 624], [87, 624], [152, 624], [18, 644], [87, 644], [177, 644]]" :key="c.join()">
          <rect :x="c[0]" :y="c[1]" width="13" height="13" fill="#808080" /><rect :x="c[0] + 1" :y="c[1] + 1" width="11" height="11" fill="#fff" />
        </g>
        <g v-for="r in [[17, 670, 125, 30, '#ff8080'], [152, 670, 125, 30, '#a0bfff'], [17, 715, 260, 30, '#ffffa0']]" :key="r[4]">
          <rect :x="r[0]" :y="r[1]" :width="r[2]" :height="r[3]" fill="#6c6c6c" />
          <rect :x="r[0]" :y="r[1]" :width="r[2] - 1" :height="r[3] - 1" fill="#fff" />
          <rect :x="r[0] + 1" :y="r[1] + 1" :width="r[2] - 2" :height="r[3] - 2" :fill="r[4]" />
        </g>
      </g>
      <g class="ari">
        <text x="17" y="575" textLength="158" lengthAdjust="spacingAndGlyphs" class="ttl">DDSMM Instant v1.38</text>
        <g fill="#d81414">
          <text x="35" y="635" textLength="26">Hide</text><text x="105" y="635" textLength="43" lengthAdjust="spacingAndGlyphs">Disable</text><text x="170" y="635" textLength="86">Enable Trailing</text>
        </g>
        <g fill="#f0d818">
          <text x="35" y="655" textLength="41">B/E +1</text><text x="105" y="655" textLength="64">Modify Ord</text><text x="195" y="655" textLength="75">Use Pending</text>
        </g>
        <text x="54" y="690" textLength="51">Sell 0.01</text><text x="188" y="690" textLength="52">Buy 0.01</text>
        <text x="64" y="735" textLength="166">Close All - Magic #15345766</text>
      </g>
    </svg>

    <div class="tabs">
      <span class="t1">EURUSD,M30</span><span class="t2">AUDUSD,M30</span><span class="t3">GBPUSD,M30</span>
      <svg width="22" height="10"><path d="M4 1v8L0 5zM14 1v8l4-4z" fill="#888" /></svg>
    </div>

    <section class="terminal">
      <aside><b>x</b><div><span>Терминал</span></div></aside>
      <div class="tbl">
        <div class="body">
          <div class="list">
            <div class="r head"><span v-for="(h, i) in heads" :key="i">{{ h }}<svg v-if="!i" width="6" height="10"><path d="M1 9L4 1" stroke="#777" /></svg></span></div>
            <template v-for="(r, i) in rows" :key="i">
              <div v-if="r" class="r" :class="{ alt: i % 2, pend: i > 2 }">
                <span v-for="(c, k) in r.slice(1)" :key="k" :class="{ hit: c === '1.04692' }">
                  <svg v-if="!k" width="14" height="16"><path d="M1.500 1.500h6l3 3v10h-9z" fill="#fff" stroke="#666" /><path d="M7.500 1.500v3h3" fill="none" stroke="#555" /><circle cx="10" cy="12" r="3" :fill="r[0] === 'r' ? '#d8452a' : '#2b95d8'" :stroke="r[0] === 'r' ? '#94301c' : '#1b659c'" stroke-width=".6" /></svg>{{ c }}
                </span>
              </div>
              <div v-else class="r balance">
                <svg width="12" height="14"><rect x=".5" y=".5" width="11" height="13" rx="1" fill="#fff" stroke="#666" /><path d="M6 3l4 4H7.500v4h-3V7H2z" fill="#2fae38" stroke="#0c6a18" stroke-width=".8" /></svg>
                <b>Баланс: 379.45&nbsp; Средства: 399.38&nbsp; Залог: 174.87&nbsp; Свободно: 224.51&nbsp; Уровень: 228.39%</b><b class="sum">19.93</b>
              </div>
            </template>
          </div>
          <div class="scrollbar">
            <svg width="15" height="18"><path d="M3.500 12.500l4-5 4 5" stroke="#555" stroke-width="1.800" fill="none" /></svg>
            <i></i>
            <svg width="15" height="16"><path d="M3.500 5.500l4 5 4-5" stroke="#555" stroke-width="1.800" fill="none" /></svg>
          </div>
        </div>
        <div class="btabs"><span class="act">Торговля</span><span v-for="t in termTabs" :key="t[0]" class="bt" :style="{ width: t[1] + 'px' }">{{ t[0] }}</span></div>
      </div>
    </section>

    <footer class="status">
      <span class="help">Для справки, нажмите F1</span>
      <span v-for="s in status" :key="s[0]" class="cell" :style="{ width: s[1] + 'px' }">{{ s[0] }}</span>
      <span class="cell net">
        <svg width="24" height="14"><path v-for="k in 8" :key="k" :d="`M${k * 3 - 1.500} 1V${11.5 - k}`" stroke="#6f8f20" stroke-width="2" /><path v-for="k in 8" :key="'b' + k" :d="`M${k * 3 - 1.500} 13V${12.500 - k}`" stroke="#163c50" stroke-width="2" /></svg>
        <em>2418/4 kb</em>
      </span>
      <svg class="corner" width="16" height="20"><path d="M1 20L16 5M5 20L16 9M9 20l7-7M13 20l3-3" stroke="#999" stroke-width="1.300" /></svg>
    </footer>

    <div class="taskbar">
      <svg class="exp" width="34" height="32"><use href="#explorer" /></svg>
      <span v-for="(a, i) in apps" :key="i" class="app" :class="{ on: i === 2 }"><svg width="32" height="32"><use :href="'#' + a" /><text v-if="a === 'alpari'" x="3.500" y="27" textLength="25" lengthAdjust="spacingAndGlyphs" class="alp">alpari</text></svg></span>
      <div class="tray">
        <svg v-for="t in tray" :key="t" width="18" height="18"><use :href="'#' + t" /></svg>
        <span class="lang">РУС</span>
        <div class="time"><span>12:15</span><span>02.04.2013</span></div>
      </div>
    </div>
  </div>
</template>

<style>
html, body { margin: 0; background: #f0f0f0; overflow: hidden; }
</style>

<style scoped>
.screen { width: 1920px; height: 1080px; display: flex; flex-direction: column; overflow: hidden; background: #f0f0f0; font: 11px "Noto Sans", "Open Sans", sans-serif; color: #111; }
.defs { position: absolute; }
svg { flex: none; display: block; }
.title { height: 23px; background: #6aabf6; border-bottom: 1px solid #5a8fce; display: grid; grid-template-columns: 110px 1fr 110px; box-sizing: border-box; }
.appicon { margin-left: 2px; }
.title h1 { margin: 0; font: 14.5px/15px "Noto Sans", "Open Sans", sans-serif; text-align: center; color: #26323f; letter-spacing: -0.1px; white-space: nowrap; }
.winbtns { justify-self: end; }
.menu { height: 20px; display: flex; align-items: center; border-bottom: 1px solid #a0a0a0; font-size: 11.3px; }
.menuicon { margin-left: 4px; }
.menu .fit { white-space: nowrap; flex: none; letter-spacing: -0.25px; margin-top: -2px; }
.mdi { margin-left: auto; display: flex; gap: 2px; padding-right: 1px; }
.mdi svg { border: 1px solid #93a8be; background: #e4edf7; width: 16px; height: 16px; box-sizing: content-box; margin: 0; }
.bar { box-sizing: border-box; display: flex; align-items: center; flex: none; }
.bar span { flex: none; }
.first { height: 27px; border-top: 1px solid #fff; border-bottom: 1px solid #a8a8a8; }
.second { height: 26px; border-top: 1px solid #fff; }
.icon, .press { display: flex; align-items: center; justify-content: center; }
.press { height: 23px; box-sizing: border-box; border: 1px solid #fff; border-left-color: #999; border-top-color: #999; background: #f8f8f8; }
.press b, .text { font: 11.4px "Noto Sans", sans-serif; white-space: nowrap; }
.press b { margin-left: 5px; letter-spacing: -0.15px; }
.text { letter-spacing: -0.2px; }
.sep { width: 1px; height: 24px; background: #9c9c9c; }
.last { margin-left: 2px; }
.grip { height: 19px; background: repeating-linear-gradient(#a8a8a8 0 1px, #f0f0f0 1px 2px); }
.arr { height: 0; border: 3px solid transparent; border-top: 4px solid #000; border-bottom: 0; box-sizing: border-box; }
.chat { margin-left: auto; margin-right: 2px; width: 24px; height: 22px; border: 1px solid #aaa; display: grid; place-items: center; }
.chat > * { grid-area: 1 / 1; }
.chat i { font: bold 10px/10px "Noto Sans", sans-serif; color: #fff; margin-bottom: 4px; }
.tf { width: 28px; height: 23px; display: flex; justify-content: center; font: 9.3px "DejaVu Sans", sans-serif; color: #444; }
.tf em { font-style: normal; width: 25px; height: 23px; line-height: 22px; box-sizing: border-box; text-align: center; border: 1px solid transparent; letter-spacing: -0.4px; }
.tf em.on { border-color: #999 #fff #fff #999; background: #f8f8f8; }
.chart { height: 715px; }
.tah text { font: 9.5px "DejaVu Sans Condensed", "DejaVu Sans", sans-serif; fill: #000; }
.tah .dim { fill: #b8b8b8; }
.tah .yel { fill: #f0f020; font-size: 10.5px; }
.tah .m5 { fill: #6c6c6c; font-size: 12.5px; }
.wave { font: 30px Lato, "Open Sans", sans-serif; fill: #dd2228; text-anchor: middle; }
.big { font: 32px "Liberation Sans", sans-serif; fill: #f80808; stroke: #f80808; stroke-width: 0.4px; }
.gen { font: 10px "DejaVu Sans", sans-serif; fill: #c8c8c8; }
.mono text { font: 11.5px "DejaVu Sans Mono", monospace; fill: #000; }
.spread { font: 13.3px "Liberation Mono", monospace; fill: #000; }
.ari text { font: 13px "Liberation Sans", sans-serif; }
.ari .ttl { font-size: 16px; fill: #fff; }
.tabs { height: 23px; box-sizing: border-box; border-top: 1px solid #000; display: flex; align-items: flex-start; color: #777; font-size: 11px; letter-spacing: -0.25px; flex: none; border-bottom: 1px solid #fff; }
.tabs span { box-sizing: border-box; height: 19px; line-height: 16px; text-align: center; }
.tabs .t1 { width: 92px; border-left: 1px solid #888; margin-left: 1px; }
.tabs .t2 { width: 88px; border: solid #000; border-width: 0 2px 2px 1px; background: #fff; color: #000; height: 20px; margin-left: -1px; }
.tabs .t3 { width: 84px; background: linear-gradient(#777, #777) right 3px / 1px 14px no-repeat; padding-right: 2px; }
.tabs svg { margin-left: auto; margin-top: 5px; margin-right: 4px; }
.terminal { height: 183px; display: flex; flex: none; border-bottom: 1px solid #a0a0a0; box-sizing: border-box; }
aside { width: 15px; flex: none; display: flex; flex-direction: column; align-items: center; }
aside b { font: bold 10px/13px "DejaVu Sans", sans-serif; height: 15px; }
aside div { width: 13px; height: 165px; background: linear-gradient(#d3e0ee, #b6cde6); display: flex; align-items: flex-end; }
aside span { writing-mode: vertical-rl; transform: rotate(180deg); font-size: 11px; line-height: 13px; padding-top: 2px; }
.tbl { flex: 1; display: flex; flex-direction: column; }
.body { height: 160px; box-sizing: border-box; border: 1px solid #999; border-right: 0; border-bottom: 2px solid #000; display: flex; background: #fff; overflow: hidden; width: 1902px; margin-top: 1px; }
.list { width: 1883px; flex: none; overflow: hidden; }
.r { height: 20px; display: grid; grid-template-columns: 172px 293px 120px 93px 120px 133px 133px 133px 133px 133px 133px 133px 1fr; box-sizing: border-box; border-bottom: 1px solid #ccc; letter-spacing: -0.35px; }
.r > span { box-sizing: border-box; text-align: right; line-height: 19px; border-right: 1px solid #c4c4c4; padding-right: 2px; white-space: nowrap; }
.r > span:nth-child(2) { letter-spacing: -0.18px; }
.r > span:nth-child(5) { letter-spacing: 0; }
.r > span:nth-child(3) { letter-spacing: -0.2px; }
.r > span:last-child { border-right: 0; padding-right: 4px; }
.r > span:first-child { display: flex; align-items: center; gap: 7px; padding-left: 4px; }
.head { height: 24px; background: #fcfcfc; }
.head > span, .head > span:nth-child(n) { line-height: 24px; border-right-color: #e0e8f0; padding-right: 5px; letter-spacing: 0; }
.head > span:first-child { gap: 13px; padding-left: 6px; }
.alt { background: #ebebeb; }
.pend > span:nth-child(10), .pend > span:nth-child(11) { border-right: 0; }
.hit { background: #62f062 content-box; padding-left: 1px; }
.balance { display: flex; align-items: center; background: #c8c8c8; padding: 0 4px; gap: 9px; letter-spacing: -0.1px; }
.balance b { font-weight: 700; font-size: 11px; }
.balance .sum { margin-left: auto; letter-spacing: -0.4px; }
.scrollbar { width: 17px; background: #f0f0f0; display: flex; flex-direction: column; align-items: center; }
.scrollbar i { width: 15px; height: 106px; background: #cdcdcd; }
.scrollbar svg:last-child { margin-top: 17px; }
.btabs { display: flex; margin-top: -1px; color: #777; line-height: 20px; letter-spacing: -0.1px; padding-left: 3px; }
.act { box-sizing: border-box; width: 67px; height: 18px; line-height: 17px; border: solid #000; border-width: 0 2px 2px 1px; background: #fff; color: #000; text-align: center; }
.bt { box-sizing: border-box; padding-left: 9px; white-space: nowrap; background: linear-gradient(#777, #777) right 4px / 1px 12px no-repeat; height: 20px; }
.status { height: 22px; flex: none; display: flex; align-items: center; border-top: 1px solid #fff; box-sizing: border-box; font-size: 11px; letter-spacing: -0.25px; padding-top: 2px; }
.help { padding-left: 2px; width: 1194px; box-sizing: border-box; letter-spacing: 0; }
.cell { box-sizing: border-box; border-left: 1px solid #999; padding-left: 6px; height: 17px; line-height: 16px; white-space: nowrap; }
.net { display: flex; align-items: center; gap: 33px; flex: 1; }
.net em { font-style: normal; }
.corner { align-self: flex-end; }
.taskbar { flex: 1; background: linear-gradient(#3f7ab8 0, #4a86c5 3px, #4d89c8 100%); border-top: 1px solid #3b6fa8; display: flex; align-items: center; }
.exp { margin: 0 16px 0 29px; }
.app { box-sizing: border-box; width: 58px; height: 39px; margin-right: 4px; border: 1px solid #8fb3da; background: #709cce; display: grid; place-items: center; }
.app.on { background: linear-gradient(#88aad4, #a8c0e0); border-color: #dfeaf6; }
.alp { font: 11px "DejaVu Sans Condensed", sans-serif; fill: #222; }
.tray { margin-left: auto; display: flex; align-items: center; gap: 6px; color: #fff; }
.lang { margin-left: 8px; font-size: 11.5px; width: 26px; letter-spacing: -0.3px; }
.time { width: 70px; display: flex; flex-direction: column; align-items: center; line-height: 17px; font-size: 11.3px; margin-right: 17px; letter-spacing: -0.2px; }
</style>
